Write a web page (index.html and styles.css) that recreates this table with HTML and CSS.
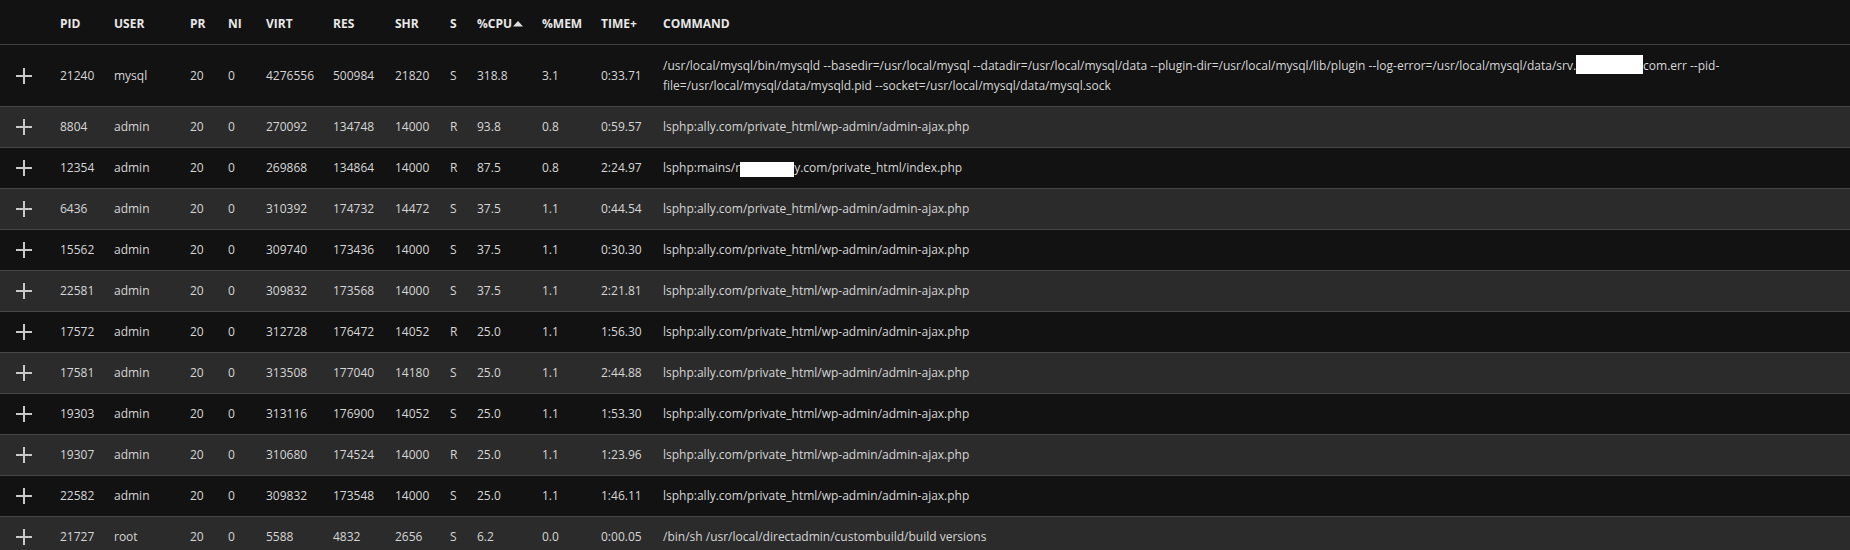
FILE: index.html
```html
<!DOCTYPE html>
<html>
<head>
<meta charset="utf-8">
<link rel="stylesheet" href="styles.css">
</head>
<body>
<div class="proc-table">
  <div class="row head">
    <div class="cell"></div>
    <div class="cell">PID</div>
    <div class="cell">USER</div>
    <div class="cell">PR</div>
    <div class="cell">NI</div>
    <div class="cell">VIRT</div>
    <div class="cell">RES</div>
    <div class="cell">SHR</div>
    <div class="cell">S</div>
    <div class="cell">%CPU<svg class="sort" width="10" height="7" viewBox="0 0 10 7"><path d="M0 6.5 L5 1 L10 6.5 Z" fill="#e0e0e0"/></svg></div>
    <div class="cell">%MEM</div>
    <div class="cell">TIME+</div>
    <div class="cell">COMMAND</div>
  </div>

  <div class="row dark">
    <div class="cell icon"><svg width="16" height="16" viewBox="0 0 16 16"><path d="M8 0 V16 M0 8 H16" stroke="#c9c9c9" stroke-width="2"/></svg></div>
    <div class="cell">21240</div><div class="cell">mysql</div><div class="cell">20</div><div class="cell">0</div><div class="cell">4276556</div><div class="cell">500984</div><div class="cell">21820</div><div class="cell">S</div><div class="cell">318.8</div><div class="cell">3.1</div><div class="cell">0:33.71</div>
    <div class="cell cmd">/usr/local/mysql/bin/mysqld --basedir=/usr/local/mysql --datadir=/usr/local/mysql/data --plugin-dir=/usr/local/mysql/lib/plugin --log-error=/usr/local/mysql/data/srv.<span class="redact r1"></span>com.err --pid-file=/usr/local/mysql/data/mysqld.pid --socket=/usr/local/mysql/data/mysql.sock</div>
  </div>

  <div class="row light">
    <div class="cell icon"><svg width="16" height="16" viewBox="0 0 16 16"><path d="M8 0 V16 M0 8 H16" stroke="#c9c9c9" stroke-width="2"/></svg></div>
    <div class="cell">8804</div><div class="cell">admin</div><div class="cell">20</div><div class="cell">0</div><div class="cell">270092</div><div class="cell">134748</div><div class="cell">14000</div><div class="cell">R</div><div class="cell">93.8</div><div class="cell">0.8</div><div class="cell">0:59.57</div>
    <div class="cell cmd">lsphp:ally.com/private_html/wp-admin/admin-ajax.php</div>
  </div>

  <div class="row dark">
    <div class="cell icon"><svg width="16" height="16" viewBox="0 0 16 16"><path d="M8 0 V16 M0 8 H16" stroke="#c9c9c9" stroke-width="2"/></svg></div>
    <div class="cell">12354</div><div class="cell">admin</div><div class="cell">20</div><div class="cell">0</div><div class="cell">269868</div><div class="cell">134864</div><div class="cell">14000</div><div class="cell">R</div><div class="cell">87.5</div><div class="cell">0.8</div><div class="cell">2:24.97</div>
    <div class="cell cmd">lsphp:mains/r<span class="redact r2"></span>y.com/private_html/index.php</div>
  </div>

  <div class="row light">
    <div class="cell icon"><svg width="16" height="16" viewBox="0 0 16 16"><path d="M8 0 V16 M0 8 H16" stroke="#c9c9c9" stroke-width="2"/></svg></div>
    <div class="cell">6436</div><div class="cell">admin</div><div class="cell">20</div><div class="cell">0</div><div class="cell">310392</div><div class="cell">174732</div><div class="cell">14472</div><div class="cell">S</div><div class="cell">37.5</div><div class="cell">1.1</div><div class="cell">0:44.54</div>
    <div class="cell cmd">lsphp:ally.com/private_html/wp-admin/admin-ajax.php</div>
  </div>

  <div class="row dark">
    <div class="cell icon"><svg width="16" height="16" viewBox="0 0 16 16"><path d="M8 0 V16 M0 8 H16" stroke="#c9c9c9" stroke-width="2"/></svg></div>
    <div class="cell">15562</div><div class="cell">admin</div><div class="cell">20</div><div class="cell">0</div><div class="cell">309740</div><div class="cell">173436</div><div class="cell">14000</div><div class="cell">S</div><div class="cell">37.5</div><div class="cell">1.1</div><div class="cell">0:30.30</div>
    <div class="cell cmd">lsphp:ally.com/private_html/wp-admin/admin-ajax.php</div>
  </div>

  <div class="row light">
    <div class="cell icon"><svg width="16" height="16" viewBox="0 0 16 16"><path d="M8 0 V16 M0 8 H16" stroke="#c9c9c9" stroke-width="2"/></svg></div>
    <div class="cell">22581</div><div class="cell">admin</div><div class="cell">20</div><div class="cell">0</div><div class="cell">309832</div><div class="cell">173568</div><div class="cell">14000</div><div class="cell">S</div><div class="cell">37.5</div><div class="cell">1.1</div><div class="cell">2:21.81</div>
    <div class="cell cmd">lsphp:ally.com/private_html/wp-admin/admin-ajax.php</div>
  </div>

  <div class="row dark">
    <div class="cell icon"><svg width="16" height="16" viewBox="0 0 16 16"><path d="M8 0 V16 M0 8 H16" stroke="#c9c9c9" stroke-width="2"/></svg></div>
    <div class="cell">17572</div><div class="cell">admin</div><div class="cell">20</div><div class="cell">0</div><div class="cell">312728</div><div class="cell">176472</div><div class="cell">14052</div><div class="cell">R</div><div class="cell">25.0</div><div class="cell">1.1</div><div class="cell">1:56.30</div>
    <div class="cell cmd">lsphp:ally.com/private_html/wp-admin/admin-ajax.php</div>
  </div>

  <div class="row light">
    <div class="cell icon"><svg width="16" height="16" viewBox="0 0 16 16"><path d="M8 0 V16 M0 8 H16" stroke="#c9c9c9" stroke-width="2"/></svg></div>
    <div class="cell">17581</div><div class="cell">admin</div><div class="cell">20</div><div class="cell">0</div><div class="cell">313508</div><div class="cell">177040</div><div class="cell">14180</div><div class="cell">S</div><div class="cell">25.0</div><div class="cell">1.1</div><div class="cell">2:44.88</div>
    <div class="cell cmd">lsphp:ally.com/private_html/wp-admin/admin-ajax.php</div>
  </div>

  <div class="row dark">
    <div class="cell icon"><svg width="16" height="16" viewBox="0 0 16 16"><path d="M8 0 V16 M0 8 H16" stroke="#c9c9c9" stroke-width="2"/></svg></div>
    <div class="cell">19303</div><div class="cell">admin</div><div class="cell">20</div><div class="cell">0</div><div class="cell">313116</div><div class="cell">176900</div><div class="cell">14052</div><div class="cell">S</div><div class="cell">25.0</div><div class="cell">1.1</div><div class="cell">1:53.30</div>
    <div class="cell cmd">lsphp:ally.com/private_html/wp-admin/admin-ajax.php</div>
  </div>

  <div class="row light">
    <div class="cell icon"><svg width="16" height="16" viewBox="0 0 16 16"><path d="M8 0 V16 M0 8 H16" stroke="#c9c9c9" stroke-width="2"/></svg></div>
    <div class="cell">19307</div><div class="cell">admin</div><div class="cell">20</div><div class="cell">0</div><div class="cell">310680</div><div class="cell">174524</div><div class="cell">14000</div><div class="cell">R</div><div class="cell">25.0</div><div class="cell">1.1</div><div class="cell">1:23.96</div>
    <div class="cell cmd">lsphp:ally.com/private_html/wp-admin/admin-ajax.php</div>
  </div>

  <div class="row dark">
    <div class="cell icon"><svg width="16" height="16" viewBox="0 0 16 16"><path d="M8 0 V16 M0 8 H16" stroke="#c9c9c9" stroke-width="2"/></svg></div>
    <div class="cell">22582</div><div class="cell">admin</div><div class="cell">20</div><div class="cell">0</div><div class="cell">309832</div><div class="cell">173548</div><div class="cell">14000</div><div class="cell">S</div><div class="cell">25.0</div><div class="cell">1.1</div><div class="cell">1:46.11</div>
    <div class="cell cmd">lsphp:ally.com/private_html/wp-admin/admin-ajax.php</div>
  </div>

  <div class="row light">
    <div class="cell icon"><svg width="16" height="16" viewBox="0 0 16 16"><path d="M8 0 V16 M0 8 H16" stroke="#c9c9c9" stroke-width="2"/></svg></div>
    <div class="cell">21727</div><div class="cell">root</div><div class="cell">20</div><div class="cell">0</div><div class="cell">5588</div><div class="cell">4832</div><div class="cell">2656</div><div class="cell">S</div><div class="cell">6.2</div><div class="cell">0.0</div><div class="cell">0:00.05</div>
    <div class="cell cmd">/bin/sh /usr/local/directadmin/custombuild/build versions</div>
  </div>
</div>
</body>
</html>
```

FILE: styles.css
```css
html, body {
  margin: 0;
  padding: 0;
  background: #121212;
}

body {
  font-family: "Open Sans", "DejaVu Sans", sans-serif;
  font-size: 12px;
  color: #d6d6d6;
  overflow: hidden;
}

.proc-table {
  display: flex;
  flex-direction: column;
  width: 1850px;
}

.row {
  display: grid;
  grid-template-columns: 52px 54px 76px 38px 38px 67px 62px 55px 27px 65px 59px 62px 1fr;
  align-items: center;
  border-bottom: 1px solid #474747;
  line-height: 20px;
}

.row.dark { background: #121212; }
.row.light { background: #2b2b2b; }

.cell {
  padding: 10px 0 10px 8px;
  white-space: nowrap;
}

.cell.cmd {
  white-space: normal;
  padding-right: 8px;
  overflow-wrap: normal;
}

.cell.icon {
  padding: 0 0 0 16px;
  display: flex;
  align-items: center;
}

.cell.icon svg { display: block; }

.head {
  background: #121212;
  font-weight: 700;
  color: #e8e8e8;
  border-bottom: 1px solid #3f3f3f;
}

.head .cell {
  padding-top: 14px;
  padding-bottom: 10px;
}

.sort {
  display: inline-block;
  margin-left: 1px;
  vertical-align: 1px;
}

.redact {
  display: inline-block;
  background: #ffffff;
}

.redact.r1 {
  width: 67px;
  height: 19px;
  vertical-align: -4px;
}

.redact.r2 {
  width: 54px;
  height: 15px;
  vertical-align: -5px;
}
```
